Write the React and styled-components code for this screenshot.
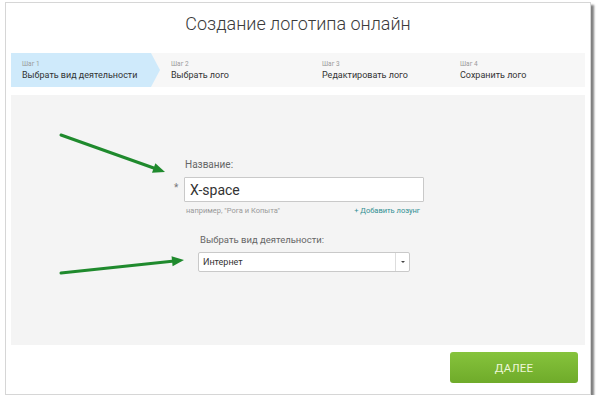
import React from "react";
import styled, { createGlobalStyle } from "styled-components";

const GlobalStyle = createGlobalStyle`
  body {
    margin: 0;
    background: #fff;
    font-family: Roboto, "Liberation Sans", Arial, sans-serif;
  }
`;

const steps = [
  { id: 1, title: "Выбрать вид деятельности", width: 149, active: true },
  { id: 2, title: "Выбрать лого", width: 151 },
  { id: 3, title: "Редактировать лого", width: 138 },
  { id: 4, title: "Сохранить лого" },
];

const Card = styled.div`
  box-sizing: border-box;
  width: 586px;
  height: 393px;
  margin: 2px 0 0 5px;
  padding: 0 5px 0 5px;
  border: 1px solid #d6d6d6;
  background: #fff;
  box-shadow: 3px 3px 2px rgba(0, 0, 0, 0.5);
  display: flex;
  flex-direction: column;
`;

const Title = styled.h1`
  margin: 10px 0 0;
  font-size: 18px;
  line-height: 22px;
  font-weight: 300;
  color: #3a3a3a;
  text-align: center;
`;

const StepsBar = styled.div`
  margin-top: 18px;
  height: 34px;
  display: flex;
  background: #f7f7f7;
`;

const Step = styled.div`
  box-sizing: border-box;
  flex: ${(p) => (p.$width ? `0 0 ${p.$width}px` : "1")};
  padding: 7px 0 0 11px;
  background: ${(p) => (p.$active ? "#cfeafb" : "transparent")};
  clip-path: ${(p) =>
    p.$active
      ? "polygon(0 0, calc(100% - 9px) 0, 100% 50%, calc(100% - 9px) 100%, 0 100%)"
      : "none"};
`;

const StepNum = styled.div`
  font-size: 6.5px;
  line-height: 9px;
  color: #9a9a9a;
`;

const StepTitle = styled.div`
  font-size: 9px;
  line-height: 12px;
  color: #333;
`;

const Panel = styled.div`
  position: relative;
  margin-top: 8px;
  height: 250px;
  box-sizing: border-box;
  padding: 63px 0 0 163px;
  background: #f4f4f4;
`;

const Arrows = styled.svg`
  position: absolute;
  left: 0;
  top: 0;
  pointer-events: none;
`;

const NameGroup = styled.div`
  display: grid;
  grid-template-columns: 10px 240px;
  grid-template-rows: auto auto auto;
`;

const Label = styled.label`
  display: block;
  grid-column: ${(p) => p.$col || "auto"};
  font-size: ${(p) => p.$size || 10}px;
  line-height: 14px;
  color: #666;
  padding-left: ${(p) => p.$indent || 0}px;
`;

const Star = styled.span`
  grid-column: 1;
  grid-row: 2;
  align-self: center;
  font-size: 10px;
  color: #777;
`;

const Input = styled.div`
  grid-column: 2;
  grid-row: 2;
  margin-top: 5px;
  height: 25px;
  box-sizing: border-box;
  border: 1px solid #c9c9c9;
  border-radius: 1px;
  background: #fff;
  padding-left: 5px;
  display: flex;
  align-items: center;
  font-size: 14px;
  color: #333;
`;

const Hint = styled.div`
  grid-column: 2;
  grid-row: 3;
  margin-top: 4px;
  padding: 0 4px 0 2px;
  display: flex;
  justify-content: space-between;
  font-size: 7.5px;
  line-height: 10px;
  color: #999;
`;

const Slogan = styled.span`
  color: #2f8f92;
`;

const SelectGroup = styled.div`
  margin: 17px 0 0 24px;
  width: 212px;
`;

const Select = styled.div`
  margin-top: 5px;
  height: 20px;
  box-sizing: border-box;
  border: 1px solid #c9c9c9;
  border-radius: 2px;
  background: #fff;
  display: flex;
  align-items: stretch;
  font-size: 9px;
  color: #333;
`;

const SelectValue = styled.span`
  flex: 1;
  display: flex;
  align-items: center;
  padding-left: 4px;
`;

const Caret = styled.span`
  width: 13px;
  border-left: 1px solid #ddd;
  display: flex;
  align-items: center;
  justify-content: center;
  &::after {
    content: "";
    border-left: 2px solid transparent;
    border-right: 2px solid transparent;
    border-top: 2px solid #444;
  }
`;

const Footer = styled.div`
  display: flex;
  justify-content: flex-end;
  padding: 7px 7px 0 0;
`;

const NextButton = styled.button`
  width: 128px;
  height: 31px;
  border: none;
  border-radius: 3px;
  background: linear-gradient(#86c33c, #6fab2a);
  color: #eef7d8;
  font-family: inherit;
  font-size: 11.5px;
  letter-spacing: 0.2px;
  cursor: pointer;
`;

const Arrow = ({ x1, y1, x2, y2 }) => {
  const a = Math.atan2(y2 - y1, x2 - x1);
  const len = 12;
  const w = 5;
  const bx = x2 - len * Math.cos(a);
  const by = y2 - len * Math.sin(a);
  const px = -Math.sin(a) * w;
  const py = Math.cos(a) * w;
  return (
    <g fill="#1f8a2d" stroke="#1f8a2d">
      <line x1={x1} y1={y1} x2={bx} y2={by} strokeWidth="3" strokeLinecap="round" />
      <polygon
        stroke="none"
        points={`${x2},${y2} ${bx + px},${by + py} ${bx - px},${by - py}`}
      />
    </g>
  );
};

export default function App() {
  return (
    <>
      <GlobalStyle />
      <Card>
        <Title>Создание логотипа онлайн</Title>
        <StepsBar>
          {steps.map((s) => (
            <Step key={s.id} $width={s.width} $active={s.active}>
              <StepNum>Шаг {s.id}</StepNum>
              <StepTitle>{s.title}</StepTitle>
            </Step>
          ))}
        </StepsBar>
        <Panel>
          <Arrows width="575" height="250">
            <Arrow x1={50} y1={40} x2={154} y2={77} />
            <Arrow x1={50} y1={178} x2={173} y2={165} />
          </Arrows>
          <NameGroup>
            <Label $col={2} $indent={1}>
              Название:
            </Label>
            <Star>*</Star>
            <Input>X-space</Input>
            <Hint>
              <span>например, "Рога и Копыта"</span>
              <Slogan>+ Добавить лозунг</Slogan>
            </Hint>
          </NameGroup>
          <SelectGroup>
            <Label $size={9.5} $indent={2}>
              Выбрать вид деятельности:
            </Label>
            <Select>
              <SelectValue>Интернет</SelectValue>
              <Caret />
            </Select>
          </SelectGroup>
        </Panel>
        <Footer>
          <NextButton>ДАЛЕЕ</NextButton>
        </Footer>
      </Card>
    </>
  );
}
